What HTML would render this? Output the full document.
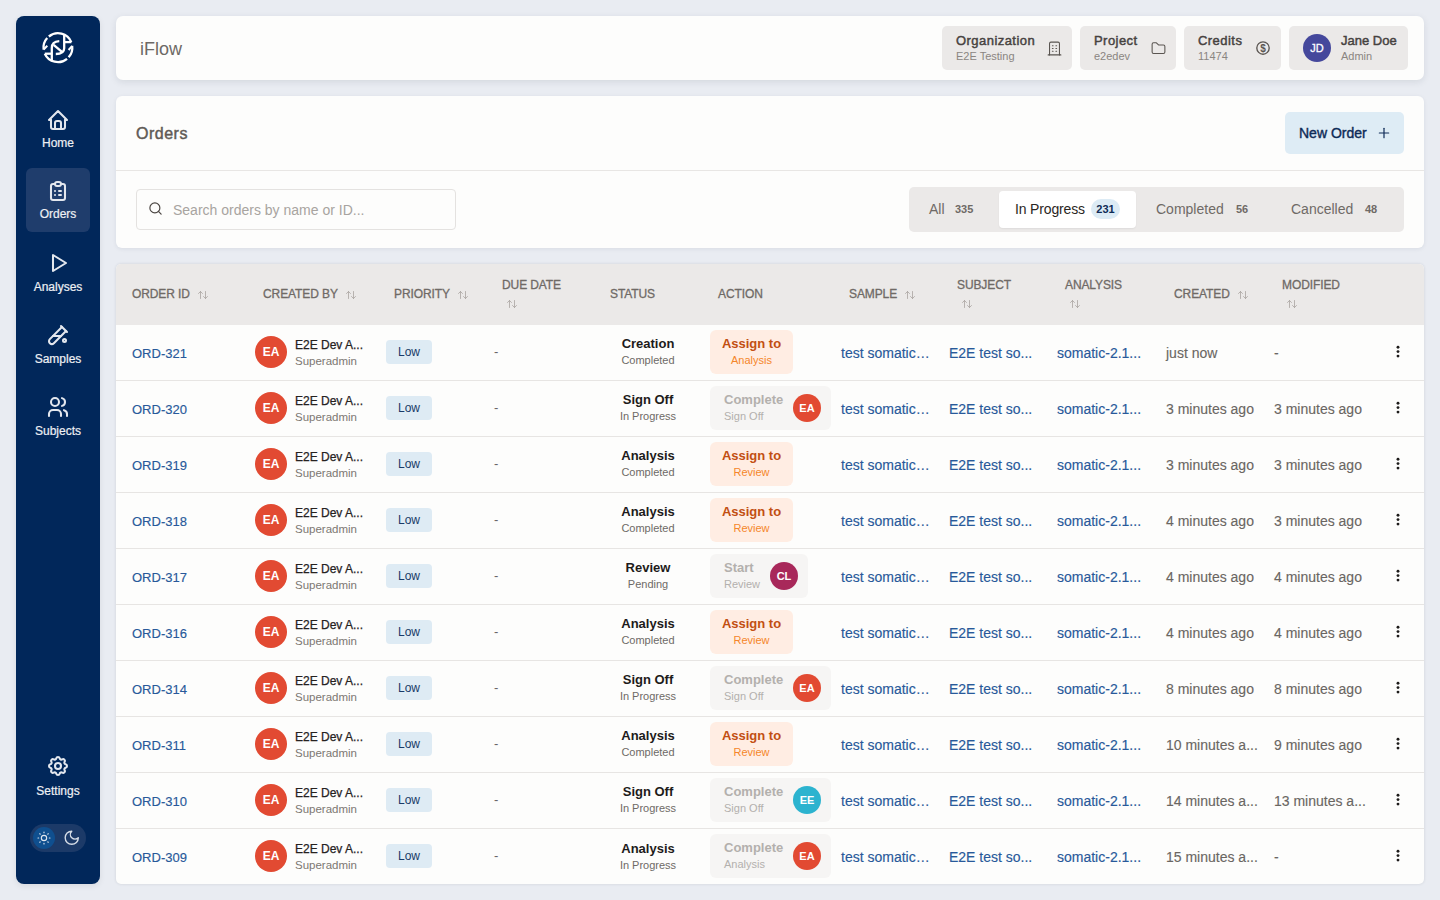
<!DOCTYPE html><html><head><meta charset="utf-8"><title>iFlow Orders</title><style>
*{box-sizing:border-box;margin:0;padding:0}
html,body{width:1440px;height:900px;overflow:hidden;background:#e9ecf2;font-family:"Liberation Sans", sans-serif;}
.abs{position:absolute}
#side{position:absolute;left:16px;top:16px;width:84px;height:868px;background:#01275a;border-radius:8px;box-shadow:0 2px 6px rgba(0,0,0,.08)}
.nav{position:absolute;left:10px;width:64px;height:64px;border-radius:6px;color:#e3e7ee;text-align:center}
.nav svg{position:absolute;left:20px;top:11px}
.nav span{position:absolute;left:0;right:0;top:39px;font-size:12px;line-height:14px;color:#eef0f4;-webkit-text-stroke:.2px #eef0f4}
.nav.act{background:#1f3d6c}
.card{position:absolute;background:#fdfdfc;border-radius:6px;box-shadow:0 1px 4px rgba(30,40,60,.08)}
.chip{position:absolute;top:10px;height:44px;background:#ebe9e8;border-radius:5px}
.chip .t{position:absolute;left:14px;top:7px;font-size:13px;font-weight:400;color:#46423f;-webkit-text-stroke:.45px #46423f;letter-spacing:.45px;line-height:15px;white-space:nowrap}
.chip .s{position:absolute;left:14px;top:24px;font-size:11px;color:#8a8581;line-height:13px;white-space:nowrap}
.chip svg{position:absolute;top:13.5px}
.th{position:absolute;top:0;height:62px;font-size:12px;font-weight:400;color:#6f6a66;-webkit-text-stroke:.3px #6f6a66;letter-spacing:-.1px;white-space:nowrap}
.row{position:absolute;left:0;width:1308px;height:56px;border-bottom:1px solid #e7e5e3}
.c{position:absolute;white-space:nowrap}
.link{color:#28599a;font-size:14px;-webkit-text-stroke:.15px #28599a}
.av{position:absolute;border-radius:50%;color:#fff;font-weight:700;text-align:center}
</style></head><body><div id="side">
<div class="abs" style="left:22px;top:11px;width:40px;height:40px"><svg width="40" height="40" viewBox="0 0 40 40" fill="none" stroke="#fff" stroke-width="2.3" stroke-linecap="butt" stroke-linejoin="miter">
<path d="M10.84 9.51 A14.4 14.4 0 0 1 33.3 15.1"/>
<path d="M34.18 18.82 A14.4 14.4 0 0 1 30.65 30.28"/>
<path d="M34.18 18.82 L30.6 23.0" stroke-width="2"/>
<path d="M6.8 26.7 A14.4 14.4 0 0 0 29.06 31.81"/>
<path d="M5.62 22.55 A14.4 14.4 0 0 1 9.2 11.06"/>
<path d="M5.62 22.55 L9.3 18.8" stroke-width="2"/>
<path d="M26.2 7.8 V21.3 Q26.2 27 17.8 27"/>
<path d="M26.2 15.1 H33.4"/>
<path d="M15.6 17.8 L24 24.9"/>
<path d="M21.3 14.2 Q13.8 14.6 13.8 21 V33.6"/>
<path d="M6.8 26.7 H13.8"/>
</svg></div>
<div class="nav" style="top:81px"><svg width="24" height="24" viewBox="0 0 24 24" fill="none" stroke="#e3e7ee" stroke-width="2.05" stroke-linecap="round" stroke-linejoin="round" ><path d="M5 12l-2 0l9 -9l9 9l-2 0"/><path d="M5 12v7a2 2 0 0 0 2 2h10a2 2 0 0 0 2 -2v-7"/><path d="M9 21v-6a2 2 0 0 1 2 -2h2a2 2 0 0 1 2 2v6"/></svg><span style="top:39px">Home</span></div>
<div class="nav act" style="top:152px"><svg width="24" height="24" viewBox="0 0 24 24" fill="none" stroke="#e3e7ee" stroke-width="2.05" stroke-linecap="round" stroke-linejoin="round" ><path d="M9 5h-2a2 2 0 0 0 -2 2v12a2 2 0 0 0 2 2h10a2 2 0 0 0 2 -2v-12a2 2 0 0 0 -2 -2h-2"/><path d="M9 5a2 2 0 0 1 2 -2h2a2 2 0 0 1 2 2v0a2 2 0 0 1 -2 2h-2a2 2 0 0 1 -2 -2z"/><path d="M9 12l.01 0"/><path d="M13 12l2 0"/><path d="M9 16l.01 0"/><path d="M13 16l2 0"/></svg><span style="top:39px">Orders</span></div>
<div class="nav" style="top:224px"><svg width="24" height="24" viewBox="0 0 24 24" fill="none" stroke="#e3e7ee" stroke-width="2.05" stroke-linecap="round" stroke-linejoin="round" ><path d="M7 4v16l13 -8z"/></svg><span style="top:39.75px">Analyses</span></div>
<div class="nav" style="top:296px"><svg width="24" height="24" viewBox="0 0 24 24" fill="none" stroke="#e3e7ee" stroke-width="2.05" stroke-linecap="round" stroke-linejoin="round" ><path d="M20 8.04l-12.122 12.124a2.857 2.857 0 1 1 -4.041 -4.04l12.122 -12.124"/><path d="M7 13h8"/><path d="M18.5 17.5m-1.5 0a1.5 1.5 0 1 0 3 0a1.5 1.5 0 1 0 -3 0"/><path d="M15 3l6 6"/></svg><span style="top:39.75px">Samples</span></div>
<div class="nav" style="top:368px"><svg width="24" height="24" viewBox="0 0 24 24" fill="none" stroke="#e3e7ee" stroke-width="2.05" stroke-linecap="round" stroke-linejoin="round" ><path d="M9 7m-4 0a4 4 0 1 0 8 0a4 4 0 1 0 -8 0"/><path d="M3 21v-2a4 4 0 0 1 4 -4h4a4 4 0 0 1 4 4v2"/><path d="M16 3.13a4 4 0 0 1 0 7.75"/><path d="M21 21v-2a4 4 0 0 0 -3 -3.85"/></svg><span style="top:39.75px">Subjects</span></div>
<div class="nav" style="top:727px"><svg width="24" height="24" viewBox="0 0 24 24" fill="none" stroke="#e3e7ee" stroke-width="2.05" stroke-linecap="round" stroke-linejoin="round" ><path d="M10.325 4.317c.426 -1.756 2.924 -1.756 3.35 0a1.724 1.724 0 0 0 2.573 1.066c1.543 -.94 3.31 .826 2.37 2.37a1.724 1.724 0 0 0 1.065 2.572c1.756 .426 1.756 2.924 0 3.35a1.724 1.724 0 0 0 -1.066 2.573c.94 1.543 -.826 3.31 -2.37 2.37a1.724 1.724 0 0 0 -2.572 1.065c-.426 1.756 -2.924 1.756 -3.35 0a1.724 1.724 0 0 0 -2.573 -1.066c-1.543 .94 -3.31 -.826 -2.37 -2.37a1.724 1.724 0 0 0 -1.065 -2.572c-1.756 -.426 -1.756 -2.924 0 -3.35a1.724 1.724 0 0 0 1.066 -2.573c-.94 -1.543 .826 -3.31 2.37 -2.37c1 .608 2.296 .07 2.572 -1.065z"/><path d="M9 12a3 3 0 1 0 6 0a3 3 0 0 0 -6 0"/></svg><span style="top:40.5px">Settings</span></div>
<div class="abs" style="left:14px;top:808px;width:56px;height:28px;border-radius:14px;background:#1c3a68"><div class="abs" style="left:3px;top:3px;width:22px;height:22px;border-radius:50%;background:#0f4f8f"></div><div class="abs" style="left:6px;top:6px"><svg width="16" height="16" viewBox="0 0 24 24" fill="none" stroke="#dfe6ef" stroke-width="1.7" stroke-linecap="round" stroke-linejoin="round" ><path d="M12 12m-4 0a4 4 0 1 0 8 0a4 4 0 1 0 -8 0"/><path d="M3 12h1m8 -9v1m8 8h1m-9 8v1m-6.4 -15.4l.7 .7m12.1 -.7l-.7 .7m0 11.4l.7 .7m-12.1 -.7l-.7 .7"/></svg></div><div class="abs" style="left:33px;top:5.2px;line-height:0"><svg width="17.5" height="17.5" viewBox="0 0 24 24" fill="none" stroke="#d5dce6" stroke-width="1.9" stroke-linecap="round" stroke-linejoin="round" ><path d="M12 3a6 6 0 0 0 9 9 9 9 0 1 1 -9 -9z"/></svg></div></div>
</div>
<div class="card" style="left:116px;top:16px;width:1308px;height:64px;border-radius:7px;box-shadow:0 2px 7px rgba(30,40,60,.10)">
<div class="abs" style="left:24px;top:22px;font-size:18px;line-height:22px;color:#6d6965">iFlow</div>
<div class="chip" style="left:826px;width:130px"><div class="t">Organization</div><div class="s">E2E Testing</div><svg width="17" height="17" viewBox="0 0 24 24" fill="none" stroke="#5a5551" stroke-width="1.5" stroke-linecap="round" stroke-linejoin="round" style="left:103.8px"><path d="M3 21l18 0"/><path d="M9 8l1 0"/><path d="M9 12l1 0"/><path d="M9 16l1 0"/><path d="M14 8l1 0"/><path d="M14 12l1 0"/><path d="M14 16l1 0"/><path d="M5 21v-16a2 2 0 0 1 2 -2h10a2 2 0 0 1 2 2v16"/></svg></div>
<div class="chip" style="left:964px;width:96px"><div class="t">Project</div><div class="s">e2edev</div><svg width="17" height="17" viewBox="0 0 24 24" fill="none" stroke="#5a5551" stroke-width="1.5" stroke-linecap="round" stroke-linejoin="round" style="left:69.8px"><path d="M5 4h4l3 3h7a2 2 0 0 1 2 2v8a2 2 0 0 1 -2 2h-14a2 2 0 0 1 -2 -2v-11a2 2 0 0 1 2 -2"/></svg></div>
<div class="chip" style="left:1068px;width:97px"><div class="t">Credits</div><div class="s">11474</div><svg style="position:absolute;left:72.3px;top:14.5px" width="14" height="14" viewBox="0 0 14 14"><circle cx="7" cy="7" r="6.2" fill="none" stroke="#5a5551" stroke-width="1.35"/><text x="7" y="10.6" text-anchor="middle" font-family="Liberation Sans" font-weight="700" font-size="10" fill="#5a5551">$</text></svg></div>
<div class="chip" style="left:1173px;width:119px"><div class="av" style="left:14px;top:8px;width:28px;height:28px;background:#45489c;font-size:11px;font-weight:400;-webkit-text-stroke:.3px #fff;line-height:28px">JD</div><div class="t" style="left:52px;letter-spacing:0">Jane Doe</div><div class="s" style="left:52px">Admin</div></div>
</div>
<div class="card" style="left:116px;top:96px;width:1308px;height:152px">
<div class="abs" style="left:20px;top:28px;font-size:16px;font-weight:400;line-height:19px;color:#5f5a56;letter-spacing:.5px;-webkit-text-stroke:.45px #5f5a56">Orders</div>
<div class="abs" style="left:1169px;top:16px;width:119px;height:42px;border-radius:5px;background:#deecf5"><div class="abs" style="left:14px;top:13px;font-size:14px;font-weight:400;line-height:16px;color:#0e2b57;-webkit-text-stroke:.4px #0e2b57">New Order</div><div class="abs" style="left:91px;top:13px"><svg width="16" height="16" viewBox="0 0 24 24" fill="none" stroke="#0e2b57" stroke-width="1.8" stroke-linecap="round" stroke-linejoin="round" ><path d="M12 5l0 14"/><path d="M5 12l14 0"/></svg></div></div>
<div class="abs" style="left:0;top:74px;width:1308px;height:1px;background:#e8e6e4"></div>
<div class="abs" style="left:20px;top:93px;width:320px;height:41px;border:1px solid #e4e2e0;border-radius:4px;background:#fdfdfc"><div class="abs" style="left:10.8px;top:10.7px;line-height:0"><svg width="15" height="15" viewBox="0 0 24 24" fill="none" stroke="#4a4541" stroke-width="1.9" stroke-linecap="round" stroke-linejoin="round" ><path d="M11 11m-8 0a8 8 0 1 0 16 0a8 8 0 1 0 -16 0"/><path d="M21 21l-4.3 -4.3"/></svg></div><div class="abs" style="left:36px;top:12px;font-size:14px;line-height:16px;color:#a8a4a0">Search orders by name or ID...</div></div>
<div class="abs" style="left:793px;top:91px;width:495px;height:45px;border-radius:5px;background:#ebe9e8"><div class="abs" style="left:90px;top:4px;width:137px;height:37px;border-radius:4px;background:#fff;box-shadow:0 1px 2px rgba(0,0,0,.06)"></div><div class="abs" style="left:20px;top:14px;font-size:14px;line-height:16px;color:#6f6a66">All</div><div class="abs" style="left:46px;top:15px;font-size:11px;font-weight:700;line-height:14px;color:#6f6a66">335</div><div class="abs" style="left:106px;top:14px;font-size:14px;line-height:16px;color:#2a2623;letter-spacing:-.15px">In Progress</div><div class="abs" style="left:182px;top:12px;width:29px;height:20px;border-radius:10px;background:#dcebf5;font-size:11px;font-weight:700;line-height:20px;text-align:center;color:#0e2b57">231</div><div class="abs" style="left:247px;top:14px;font-size:14px;line-height:16px;color:#6f6a66">Completed</div><div class="abs" style="left:327px;top:15px;font-size:11px;font-weight:700;line-height:14px;color:#6f6a66">56</div><div class="abs" style="left:382px;top:14px;font-size:14px;line-height:16px;color:#6f6a66">Cancelled</div><div class="abs" style="left:456px;top:15px;font-size:11px;font-weight:700;line-height:14px;color:#6f6a66">48</div></div>
</div>
<div class="card" style="left:116px;top:264px;width:1308px;height:620px;overflow:hidden;border-radius:5px;box-shadow:0 0 3px rgba(30,40,60,.14)">
<div class="abs" style="left:0;top:0;width:1308px;height:61px;background:#ebe9e8"></div>
<div class="th" style="left:16px;top:23px;line-height:14px">ORDER ID<svg width="12" height="12" viewBox="0 0 24 24" fill="none" stroke="#a7a29e" stroke-width="1.55" stroke-linecap="round" stroke-linejoin="round" style="vertical-align:-3px;margin-left:7.3px"><path d="M3 9l4 -4l4 4m-4 -4v14"/><path d="M21 15l-4 4l-4 -4m4 4v-14"/></svg></div>
<div class="th" style="left:147px;top:23px;line-height:14px">CREATED BY<svg width="12" height="12" viewBox="0 0 24 24" fill="none" stroke="#a7a29e" stroke-width="1.55" stroke-linecap="round" stroke-linejoin="round" style="vertical-align:-3px;margin-left:7.3px"><path d="M3 9l4 -4l4 4m-4 -4v14"/><path d="M21 15l-4 4l-4 -4m4 4v-14"/></svg></div>
<div class="th" style="left:278px;top:23px;line-height:14px">PRIORITY<svg width="12" height="12" viewBox="0 0 24 24" fill="none" stroke="#a7a29e" stroke-width="1.55" stroke-linecap="round" stroke-linejoin="round" style="vertical-align:-3px;margin-left:7.3px"><path d="M3 9l4 -4l4 4m-4 -4v14"/><path d="M21 15l-4 4l-4 -4m4 4v-14"/></svg></div>
<div class="th" style="left:386px;top:14px;line-height:14px">DUE DATE</div><div class="abs" style="left:389.6px;top:33.5px;line-height:0"><svg width="12" height="12" viewBox="0 0 24 24" fill="none" stroke="#a7a29e" stroke-width="1.55" stroke-linecap="round" stroke-linejoin="round" ><path d="M3 9l4 -4l4 4m-4 -4v14"/><path d="M21 15l-4 4l-4 -4m4 4v-14"/></svg></div>
<div class="th" style="left:494px;top:23px;line-height:14px">STATUS</div>
<div class="th" style="left:602px;top:23px;line-height:14px">ACTION</div>
<div class="th" style="left:733px;top:23px;line-height:14px">SAMPLE<svg width="12" height="12" viewBox="0 0 24 24" fill="none" stroke="#a7a29e" stroke-width="1.55" stroke-linecap="round" stroke-linejoin="round" style="vertical-align:-3px;margin-left:7.3px"><path d="M3 9l4 -4l4 4m-4 -4v14"/><path d="M21 15l-4 4l-4 -4m4 4v-14"/></svg></div>
<div class="th" style="left:841px;top:14px;line-height:14px">SUBJECT</div><div class="abs" style="left:844.6px;top:33.5px;line-height:0"><svg width="12" height="12" viewBox="0 0 24 24" fill="none" stroke="#a7a29e" stroke-width="1.55" stroke-linecap="round" stroke-linejoin="round" ><path d="M3 9l4 -4l4 4m-4 -4v14"/><path d="M21 15l-4 4l-4 -4m4 4v-14"/></svg></div>
<div class="th" style="left:949px;top:14px;line-height:14px">ANALYSIS</div><div class="abs" style="left:952.6px;top:33.5px;line-height:0"><svg width="12" height="12" viewBox="0 0 24 24" fill="none" stroke="#a7a29e" stroke-width="1.55" stroke-linecap="round" stroke-linejoin="round" ><path d="M3 9l4 -4l4 4m-4 -4v14"/><path d="M21 15l-4 4l-4 -4m4 4v-14"/></svg></div>
<div class="th" style="left:1058px;top:23px;line-height:14px">CREATED<svg width="12" height="12" viewBox="0 0 24 24" fill="none" stroke="#a7a29e" stroke-width="1.55" stroke-linecap="round" stroke-linejoin="round" style="vertical-align:-3px;margin-left:7.3px"><path d="M3 9l4 -4l4 4m-4 -4v14"/><path d="M21 15l-4 4l-4 -4m4 4v-14"/></svg></div>
<div class="th" style="left:1166px;top:14px;line-height:14px">MODIFIED</div><div class="abs" style="left:1169.6px;top:33.5px;line-height:0"><svg width="12" height="12" viewBox="0 0 24 24" fill="none" stroke="#a7a29e" stroke-width="1.55" stroke-linecap="round" stroke-linejoin="round" ><path d="M3 9l4 -4l4 4m-4 -4v14"/><path d="M21 15l-4 4l-4 -4m4 4v-14"/></svg></div>
<div class="row" style="top:61px"><div class="c" style="left:0;top:1px;width:1308px;height:55px"><div class="c link" style="left:16px;top:19.5px;font-size:13px;line-height:16px">ORD-321</div><div class="av" style="left:139px;top:10px;width:32px;height:32px;background:#e24a32;font-size:12px;line-height:32px">EA</div><div class="c" style="left:179px;top:12px;font-size:12px;line-height:15px;color:#26221f;-webkit-text-stroke:.25px #26221f">E2E Dev A...</div><div class="c" style="left:179px;top:27.5px;font-size:11.5px;line-height:14px;color:#7c7772">Superadmin</div><div class="c" style="left:270px;top:14px;width:46px;height:24px;border-radius:4px;background:#deebf4;color:#193a68;font-size:12px;line-height:24px;text-align:center">Low</div><div class="c" style="left:378px;top:18px;font-size:13px;line-height:16px;color:#666">-</div><div class="c" style="left:478px;width:108px;top:10px;text-align:center;font-size:13px;font-weight:700;line-height:16px;color:#1d1b1a">Creation</div><div class="c" style="left:478px;width:108px;top:27px;text-align:center;font-size:11px;line-height:14px;color:#6e6a66">Completed</div><div class="c" style="left:594px;top:4px;width:83px;height:44px;border-radius:6px;background:#ffede3"><div class="c" style="left:0;right:0;top:6px;text-align:center;font-size:13px;font-weight:700;line-height:16px;color:#c24f12">Assign to</div><div class="c" style="left:0;right:0;top:23px;text-align:center;font-size:11px;line-height:14px;color:#f5862a">Analysis</div></div><div class="c link" style="left:725px;top:19px;line-height:16px">test somatic…</div><div class="c link" style="left:833px;top:19px;line-height:16px">E2E test so...</div><div class="c link" style="left:941px;top:19px;line-height:16px">somatic-2.1...</div><div class="c" style="left:1050px;top:19px;font-size:14px;line-height:16px;color:#6a6662;-webkit-text-stroke:.12px #6a6662">just now</div><div class="c" style="left:1158px;top:19px;font-size:14px;line-height:16px;color:#6a6662;-webkit-text-stroke:.12px #6a6662">-</div><svg class="c" style="left:1276px;top:14px" width="12" height="20" viewBox="0 0 12 20"><circle cx="6" cy="7.2" r="1.45" fill="#1d1b1a"/><circle cx="6" cy="11.6" r="1.45" fill="#1d1b1a"/><circle cx="6" cy="16.1" r="1.45" fill="#1d1b1a"/></svg></div></div>
<div class="row" style="top:117px"><div class="c" style="left:0;top:1px;width:1308px;height:55px"><div class="c link" style="left:16px;top:19.5px;font-size:13px;line-height:16px">ORD-320</div><div class="av" style="left:139px;top:10px;width:32px;height:32px;background:#e24a32;font-size:12px;line-height:32px">EA</div><div class="c" style="left:179px;top:12px;font-size:12px;line-height:15px;color:#26221f;-webkit-text-stroke:.25px #26221f">E2E Dev A...</div><div class="c" style="left:179px;top:27.5px;font-size:11.5px;line-height:14px;color:#7c7772">Superadmin</div><div class="c" style="left:270px;top:14px;width:46px;height:24px;border-radius:4px;background:#deebf4;color:#193a68;font-size:12px;line-height:24px;text-align:center">Low</div><div class="c" style="left:378px;top:18px;font-size:13px;line-height:16px;color:#666">-</div><div class="c" style="left:478px;width:108px;top:10px;text-align:center;font-size:13px;font-weight:700;line-height:16px;color:#1d1b1a">Sign Off</div><div class="c" style="left:478px;width:108px;top:27px;text-align:center;font-size:11px;line-height:14px;color:#6e6a66">In Progress</div><div class="c" style="left:594px;top:4px;width:121px;height:44px;border-radius:6px;background:#f6f5f4"><div class="c" style="left:14px;top:6px;font-size:13px;font-weight:700;line-height:16px;color:#b3b0ad">Complete</div><div class="c" style="left:14px;top:23px;font-size:11px;line-height:14px;color:#b3b0ad">Sign Off</div><div class="av" style="left:83px;top:8px;width:28px;height:28px;background:#e24a32;font-size:11px;line-height:28px">EA</div></div><div class="c link" style="left:725px;top:19px;line-height:16px">test somatic…</div><div class="c link" style="left:833px;top:19px;line-height:16px">E2E test so...</div><div class="c link" style="left:941px;top:19px;line-height:16px">somatic-2.1...</div><div class="c" style="left:1050px;top:19px;font-size:14px;line-height:16px;color:#6a6662;-webkit-text-stroke:.12px #6a6662">3 minutes ago</div><div class="c" style="left:1158px;top:19px;font-size:14px;line-height:16px;color:#6a6662;-webkit-text-stroke:.12px #6a6662">3 minutes ago</div><svg class="c" style="left:1276px;top:14px" width="12" height="20" viewBox="0 0 12 20"><circle cx="6" cy="7.2" r="1.45" fill="#1d1b1a"/><circle cx="6" cy="11.6" r="1.45" fill="#1d1b1a"/><circle cx="6" cy="16.1" r="1.45" fill="#1d1b1a"/></svg></div></div>
<div class="row" style="top:173px"><div class="c" style="left:0;top:1px;width:1308px;height:55px"><div class="c link" style="left:16px;top:19.5px;font-size:13px;line-height:16px">ORD-319</div><div class="av" style="left:139px;top:10px;width:32px;height:32px;background:#e24a32;font-size:12px;line-height:32px">EA</div><div class="c" style="left:179px;top:12px;font-size:12px;line-height:15px;color:#26221f;-webkit-text-stroke:.25px #26221f">E2E Dev A...</div><div class="c" style="left:179px;top:27.5px;font-size:11.5px;line-height:14px;color:#7c7772">Superadmin</div><div class="c" style="left:270px;top:14px;width:46px;height:24px;border-radius:4px;background:#deebf4;color:#193a68;font-size:12px;line-height:24px;text-align:center">Low</div><div class="c" style="left:378px;top:18px;font-size:13px;line-height:16px;color:#666">-</div><div class="c" style="left:478px;width:108px;top:10px;text-align:center;font-size:13px;font-weight:700;line-height:16px;color:#1d1b1a">Analysis</div><div class="c" style="left:478px;width:108px;top:27px;text-align:center;font-size:11px;line-height:14px;color:#6e6a66">Completed</div><div class="c" style="left:594px;top:4px;width:83px;height:44px;border-radius:6px;background:#ffede3"><div class="c" style="left:0;right:0;top:6px;text-align:center;font-size:13px;font-weight:700;line-height:16px;color:#c24f12">Assign to</div><div class="c" style="left:0;right:0;top:23px;text-align:center;font-size:11px;line-height:14px;color:#f5862a">Review</div></div><div class="c link" style="left:725px;top:19px;line-height:16px">test somatic…</div><div class="c link" style="left:833px;top:19px;line-height:16px">E2E test so...</div><div class="c link" style="left:941px;top:19px;line-height:16px">somatic-2.1...</div><div class="c" style="left:1050px;top:19px;font-size:14px;line-height:16px;color:#6a6662;-webkit-text-stroke:.12px #6a6662">3 minutes ago</div><div class="c" style="left:1158px;top:19px;font-size:14px;line-height:16px;color:#6a6662;-webkit-text-stroke:.12px #6a6662">3 minutes ago</div><svg class="c" style="left:1276px;top:14px" width="12" height="20" viewBox="0 0 12 20"><circle cx="6" cy="7.2" r="1.45" fill="#1d1b1a"/><circle cx="6" cy="11.6" r="1.45" fill="#1d1b1a"/><circle cx="6" cy="16.1" r="1.45" fill="#1d1b1a"/></svg></div></div>
<div class="row" style="top:229px"><div class="c" style="left:0;top:1px;width:1308px;height:55px"><div class="c link" style="left:16px;top:19.5px;font-size:13px;line-height:16px">ORD-318</div><div class="av" style="left:139px;top:10px;width:32px;height:32px;background:#e24a32;font-size:12px;line-height:32px">EA</div><div class="c" style="left:179px;top:12px;font-size:12px;line-height:15px;color:#26221f;-webkit-text-stroke:.25px #26221f">E2E Dev A...</div><div class="c" style="left:179px;top:27.5px;font-size:11.5px;line-height:14px;color:#7c7772">Superadmin</div><div class="c" style="left:270px;top:14px;width:46px;height:24px;border-radius:4px;background:#deebf4;color:#193a68;font-size:12px;line-height:24px;text-align:center">Low</div><div class="c" style="left:378px;top:18px;font-size:13px;line-height:16px;color:#666">-</div><div class="c" style="left:478px;width:108px;top:10px;text-align:center;font-size:13px;font-weight:700;line-height:16px;color:#1d1b1a">Analysis</div><div class="c" style="left:478px;width:108px;top:27px;text-align:center;font-size:11px;line-height:14px;color:#6e6a66">Completed</div><div class="c" style="left:594px;top:4px;width:83px;height:44px;border-radius:6px;background:#ffede3"><div class="c" style="left:0;right:0;top:6px;text-align:center;font-size:13px;font-weight:700;line-height:16px;color:#c24f12">Assign to</div><div class="c" style="left:0;right:0;top:23px;text-align:center;font-size:11px;line-height:14px;color:#f5862a">Review</div></div><div class="c link" style="left:725px;top:19px;line-height:16px">test somatic…</div><div class="c link" style="left:833px;top:19px;line-height:16px">E2E test so...</div><div class="c link" style="left:941px;top:19px;line-height:16px">somatic-2.1...</div><div class="c" style="left:1050px;top:19px;font-size:14px;line-height:16px;color:#6a6662;-webkit-text-stroke:.12px #6a6662">4 minutes ago</div><div class="c" style="left:1158px;top:19px;font-size:14px;line-height:16px;color:#6a6662;-webkit-text-stroke:.12px #6a6662">3 minutes ago</div><svg class="c" style="left:1276px;top:14px" width="12" height="20" viewBox="0 0 12 20"><circle cx="6" cy="7.2" r="1.45" fill="#1d1b1a"/><circle cx="6" cy="11.6" r="1.45" fill="#1d1b1a"/><circle cx="6" cy="16.1" r="1.45" fill="#1d1b1a"/></svg></div></div>
<div class="row" style="top:285px"><div class="c" style="left:0;top:1px;width:1308px;height:55px"><div class="c link" style="left:16px;top:19.5px;font-size:13px;line-height:16px">ORD-317</div><div class="av" style="left:139px;top:10px;width:32px;height:32px;background:#e24a32;font-size:12px;line-height:32px">EA</div><div class="c" style="left:179px;top:12px;font-size:12px;line-height:15px;color:#26221f;-webkit-text-stroke:.25px #26221f">E2E Dev A...</div><div class="c" style="left:179px;top:27.5px;font-size:11.5px;line-height:14px;color:#7c7772">Superadmin</div><div class="c" style="left:270px;top:14px;width:46px;height:24px;border-radius:4px;background:#deebf4;color:#193a68;font-size:12px;line-height:24px;text-align:center">Low</div><div class="c" style="left:378px;top:18px;font-size:13px;line-height:16px;color:#666">-</div><div class="c" style="left:478px;width:108px;top:10px;text-align:center;font-size:13px;font-weight:700;line-height:16px;color:#1d1b1a">Review</div><div class="c" style="left:478px;width:108px;top:27px;text-align:center;font-size:11px;line-height:14px;color:#6e6a66">Pending</div><div class="c" style="left:594px;top:4px;width:98px;height:44px;border-radius:6px;background:#f6f5f4"><div class="c" style="left:14px;top:6px;font-size:13px;font-weight:700;line-height:16px;color:#b3b0ad">Start</div><div class="c" style="left:14px;top:23px;font-size:11px;line-height:14px;color:#b3b0ad">Review</div><div class="av" style="left:60px;top:8px;width:28px;height:28px;background:#a8285a;font-size:11px;line-height:28px">CL</div></div><div class="c link" style="left:725px;top:19px;line-height:16px">test somatic…</div><div class="c link" style="left:833px;top:19px;line-height:16px">E2E test so...</div><div class="c link" style="left:941px;top:19px;line-height:16px">somatic-2.1...</div><div class="c" style="left:1050px;top:19px;font-size:14px;line-height:16px;color:#6a6662;-webkit-text-stroke:.12px #6a6662">4 minutes ago</div><div class="c" style="left:1158px;top:19px;font-size:14px;line-height:16px;color:#6a6662;-webkit-text-stroke:.12px #6a6662">4 minutes ago</div><svg class="c" style="left:1276px;top:14px" width="12" height="20" viewBox="0 0 12 20"><circle cx="6" cy="7.2" r="1.45" fill="#1d1b1a"/><circle cx="6" cy="11.6" r="1.45" fill="#1d1b1a"/><circle cx="6" cy="16.1" r="1.45" fill="#1d1b1a"/></svg></div></div>
<div class="row" style="top:341px"><div class="c" style="left:0;top:1px;width:1308px;height:55px"><div class="c link" style="left:16px;top:19.5px;font-size:13px;line-height:16px">ORD-316</div><div class="av" style="left:139px;top:10px;width:32px;height:32px;background:#e24a32;font-size:12px;line-height:32px">EA</div><div class="c" style="left:179px;top:12px;font-size:12px;line-height:15px;color:#26221f;-webkit-text-stroke:.25px #26221f">E2E Dev A...</div><div class="c" style="left:179px;top:27.5px;font-size:11.5px;line-height:14px;color:#7c7772">Superadmin</div><div class="c" style="left:270px;top:14px;width:46px;height:24px;border-radius:4px;background:#deebf4;color:#193a68;font-size:12px;line-height:24px;text-align:center">Low</div><div class="c" style="left:378px;top:18px;font-size:13px;line-height:16px;color:#666">-</div><div class="c" style="left:478px;width:108px;top:10px;text-align:center;font-size:13px;font-weight:700;line-height:16px;color:#1d1b1a">Analysis</div><div class="c" style="left:478px;width:108px;top:27px;text-align:center;font-size:11px;line-height:14px;color:#6e6a66">Completed</div><div class="c" style="left:594px;top:4px;width:83px;height:44px;border-radius:6px;background:#ffede3"><div class="c" style="left:0;right:0;top:6px;text-align:center;font-size:13px;font-weight:700;line-height:16px;color:#c24f12">Assign to</div><div class="c" style="left:0;right:0;top:23px;text-align:center;font-size:11px;line-height:14px;color:#f5862a">Review</div></div><div class="c link" style="left:725px;top:19px;line-height:16px">test somatic…</div><div class="c link" style="left:833px;top:19px;line-height:16px">E2E test so...</div><div class="c link" style="left:941px;top:19px;line-height:16px">somatic-2.1...</div><div class="c" style="left:1050px;top:19px;font-size:14px;line-height:16px;color:#6a6662;-webkit-text-stroke:.12px #6a6662">4 minutes ago</div><div class="c" style="left:1158px;top:19px;font-size:14px;line-height:16px;color:#6a6662;-webkit-text-stroke:.12px #6a6662">4 minutes ago</div><svg class="c" style="left:1276px;top:14px" width="12" height="20" viewBox="0 0 12 20"><circle cx="6" cy="7.2" r="1.45" fill="#1d1b1a"/><circle cx="6" cy="11.6" r="1.45" fill="#1d1b1a"/><circle cx="6" cy="16.1" r="1.45" fill="#1d1b1a"/></svg></div></div>
<div class="row" style="top:397px"><div class="c" style="left:0;top:1px;width:1308px;height:55px"><div class="c link" style="left:16px;top:19.5px;font-size:13px;line-height:16px">ORD-314</div><div class="av" style="left:139px;top:10px;width:32px;height:32px;background:#e24a32;font-size:12px;line-height:32px">EA</div><div class="c" style="left:179px;top:12px;font-size:12px;line-height:15px;color:#26221f;-webkit-text-stroke:.25px #26221f">E2E Dev A...</div><div class="c" style="left:179px;top:27.5px;font-size:11.5px;line-height:14px;color:#7c7772">Superadmin</div><div class="c" style="left:270px;top:14px;width:46px;height:24px;border-radius:4px;background:#deebf4;color:#193a68;font-size:12px;line-height:24px;text-align:center">Low</div><div class="c" style="left:378px;top:18px;font-size:13px;line-height:16px;color:#666">-</div><div class="c" style="left:478px;width:108px;top:10px;text-align:center;font-size:13px;font-weight:700;line-height:16px;color:#1d1b1a">Sign Off</div><div class="c" style="left:478px;width:108px;top:27px;text-align:center;font-size:11px;line-height:14px;color:#6e6a66">In Progress</div><div class="c" style="left:594px;top:4px;width:121px;height:44px;border-radius:6px;background:#f6f5f4"><div class="c" style="left:14px;top:6px;font-size:13px;font-weight:700;line-height:16px;color:#b3b0ad">Complete</div><div class="c" style="left:14px;top:23px;font-size:11px;line-height:14px;color:#b3b0ad">Sign Off</div><div class="av" style="left:83px;top:8px;width:28px;height:28px;background:#e24a32;font-size:11px;line-height:28px">EA</div></div><div class="c link" style="left:725px;top:19px;line-height:16px">test somatic…</div><div class="c link" style="left:833px;top:19px;line-height:16px">E2E test so...</div><div class="c link" style="left:941px;top:19px;line-height:16px">somatic-2.1...</div><div class="c" style="left:1050px;top:19px;font-size:14px;line-height:16px;color:#6a6662;-webkit-text-stroke:.12px #6a6662">8 minutes ago</div><div class="c" style="left:1158px;top:19px;font-size:14px;line-height:16px;color:#6a6662;-webkit-text-stroke:.12px #6a6662">8 minutes ago</div><svg class="c" style="left:1276px;top:14px" width="12" height="20" viewBox="0 0 12 20"><circle cx="6" cy="7.2" r="1.45" fill="#1d1b1a"/><circle cx="6" cy="11.6" r="1.45" fill="#1d1b1a"/><circle cx="6" cy="16.1" r="1.45" fill="#1d1b1a"/></svg></div></div>
<div class="row" style="top:453px"><div class="c" style="left:0;top:1px;width:1308px;height:55px"><div class="c link" style="left:16px;top:19.5px;font-size:13px;line-height:16px">ORD-311</div><div class="av" style="left:139px;top:10px;width:32px;height:32px;background:#e24a32;font-size:12px;line-height:32px">EA</div><div class="c" style="left:179px;top:12px;font-size:12px;line-height:15px;color:#26221f;-webkit-text-stroke:.25px #26221f">E2E Dev A...</div><div class="c" style="left:179px;top:27.5px;font-size:11.5px;line-height:14px;color:#7c7772">Superadmin</div><div class="c" style="left:270px;top:14px;width:46px;height:24px;border-radius:4px;background:#deebf4;color:#193a68;font-size:12px;line-height:24px;text-align:center">Low</div><div class="c" style="left:378px;top:18px;font-size:13px;line-height:16px;color:#666">-</div><div class="c" style="left:478px;width:108px;top:10px;text-align:center;font-size:13px;font-weight:700;line-height:16px;color:#1d1b1a">Analysis</div><div class="c" style="left:478px;width:108px;top:27px;text-align:center;font-size:11px;line-height:14px;color:#6e6a66">Completed</div><div class="c" style="left:594px;top:4px;width:83px;height:44px;border-radius:6px;background:#ffede3"><div class="c" style="left:0;right:0;top:6px;text-align:center;font-size:13px;font-weight:700;line-height:16px;color:#c24f12">Assign to</div><div class="c" style="left:0;right:0;top:23px;text-align:center;font-size:11px;line-height:14px;color:#f5862a">Review</div></div><div class="c link" style="left:725px;top:19px;line-height:16px">test somatic…</div><div class="c link" style="left:833px;top:19px;line-height:16px">E2E test so...</div><div class="c link" style="left:941px;top:19px;line-height:16px">somatic-2.1...</div><div class="c" style="left:1050px;top:19px;font-size:14px;line-height:16px;color:#6a6662;-webkit-text-stroke:.12px #6a6662">10 minutes a...</div><div class="c" style="left:1158px;top:19px;font-size:14px;line-height:16px;color:#6a6662;-webkit-text-stroke:.12px #6a6662">9 minutes ago</div><svg class="c" style="left:1276px;top:14px" width="12" height="20" viewBox="0 0 12 20"><circle cx="6" cy="7.2" r="1.45" fill="#1d1b1a"/><circle cx="6" cy="11.6" r="1.45" fill="#1d1b1a"/><circle cx="6" cy="16.1" r="1.45" fill="#1d1b1a"/></svg></div></div>
<div class="row" style="top:509px"><div class="c" style="left:0;top:1px;width:1308px;height:55px"><div class="c link" style="left:16px;top:19.5px;font-size:13px;line-height:16px">ORD-310</div><div class="av" style="left:139px;top:10px;width:32px;height:32px;background:#e24a32;font-size:12px;line-height:32px">EA</div><div class="c" style="left:179px;top:12px;font-size:12px;line-height:15px;color:#26221f;-webkit-text-stroke:.25px #26221f">E2E Dev A...</div><div class="c" style="left:179px;top:27.5px;font-size:11.5px;line-height:14px;color:#7c7772">Superadmin</div><div class="c" style="left:270px;top:14px;width:46px;height:24px;border-radius:4px;background:#deebf4;color:#193a68;font-size:12px;line-height:24px;text-align:center">Low</div><div class="c" style="left:378px;top:18px;font-size:13px;line-height:16px;color:#666">-</div><div class="c" style="left:478px;width:108px;top:10px;text-align:center;font-size:13px;font-weight:700;line-height:16px;color:#1d1b1a">Sign Off</div><div class="c" style="left:478px;width:108px;top:27px;text-align:center;font-size:11px;line-height:14px;color:#6e6a66">In Progress</div><div class="c" style="left:594px;top:4px;width:121px;height:44px;border-radius:6px;background:#f6f5f4"><div class="c" style="left:14px;top:6px;font-size:13px;font-weight:700;line-height:16px;color:#b3b0ad">Complete</div><div class="c" style="left:14px;top:23px;font-size:11px;line-height:14px;color:#b3b0ad">Sign Off</div><div class="av" style="left:83px;top:8px;width:28px;height:28px;background:#2cb3cf;font-size:11px;line-height:28px">EE</div></div><div class="c link" style="left:725px;top:19px;line-height:16px">test somatic…</div><div class="c link" style="left:833px;top:19px;line-height:16px">E2E test so...</div><div class="c link" style="left:941px;top:19px;line-height:16px">somatic-2.1...</div><div class="c" style="left:1050px;top:19px;font-size:14px;line-height:16px;color:#6a6662;-webkit-text-stroke:.12px #6a6662">14 minutes a...</div><div class="c" style="left:1158px;top:19px;font-size:14px;line-height:16px;color:#6a6662;-webkit-text-stroke:.12px #6a6662">13 minutes a...</div><svg class="c" style="left:1276px;top:14px" width="12" height="20" viewBox="0 0 12 20"><circle cx="6" cy="7.2" r="1.45" fill="#1d1b1a"/><circle cx="6" cy="11.6" r="1.45" fill="#1d1b1a"/><circle cx="6" cy="16.1" r="1.45" fill="#1d1b1a"/></svg></div></div>
<div class="row" style="top:565px"><div class="c" style="left:0;top:1px;width:1308px;height:55px"><div class="c link" style="left:16px;top:19.5px;font-size:13px;line-height:16px">ORD-309</div><div class="av" style="left:139px;top:10px;width:32px;height:32px;background:#e24a32;font-size:12px;line-height:32px">EA</div><div class="c" style="left:179px;top:12px;font-size:12px;line-height:15px;color:#26221f;-webkit-text-stroke:.25px #26221f">E2E Dev A...</div><div class="c" style="left:179px;top:27.5px;font-size:11.5px;line-height:14px;color:#7c7772">Superadmin</div><div class="c" style="left:270px;top:14px;width:46px;height:24px;border-radius:4px;background:#deebf4;color:#193a68;font-size:12px;line-height:24px;text-align:center">Low</div><div class="c" style="left:378px;top:18px;font-size:13px;line-height:16px;color:#666">-</div><div class="c" style="left:478px;width:108px;top:11px;text-align:center;font-size:13px;font-weight:700;line-height:16px;color:#1d1b1a">Analysis</div><div class="c" style="left:478px;width:108px;top:28px;text-align:center;font-size:11px;line-height:14px;color:#6e6a66">In Progress</div><div class="c" style="left:594px;top:4px;width:121px;height:44px;border-radius:6px;background:#f6f5f4"><div class="c" style="left:14px;top:6px;font-size:13px;font-weight:700;line-height:16px;color:#b3b0ad">Complete</div><div class="c" style="left:14px;top:23px;font-size:11px;line-height:14px;color:#b3b0ad">Analysis</div><div class="av" style="left:83px;top:8px;width:28px;height:28px;background:#e24a32;font-size:11px;line-height:28px">EA</div></div><div class="c link" style="left:725px;top:19px;line-height:16px">test somatic…</div><div class="c link" style="left:833px;top:19px;line-height:16px">E2E test so...</div><div class="c link" style="left:941px;top:19px;line-height:16px">somatic-2.1...</div><div class="c" style="left:1050px;top:19px;font-size:14px;line-height:16px;color:#6a6662;-webkit-text-stroke:.12px #6a6662">15 minutes a...</div><div class="c" style="left:1158px;top:19px;font-size:14px;line-height:16px;color:#6a6662;-webkit-text-stroke:.12px #6a6662">-</div><svg class="c" style="left:1276px;top:14px" width="12" height="20" viewBox="0 0 12 20"><circle cx="6" cy="7.2" r="1.45" fill="#1d1b1a"/><circle cx="6" cy="11.6" r="1.45" fill="#1d1b1a"/><circle cx="6" cy="16.1" r="1.45" fill="#1d1b1a"/></svg></div></div>
</div></body></html>
